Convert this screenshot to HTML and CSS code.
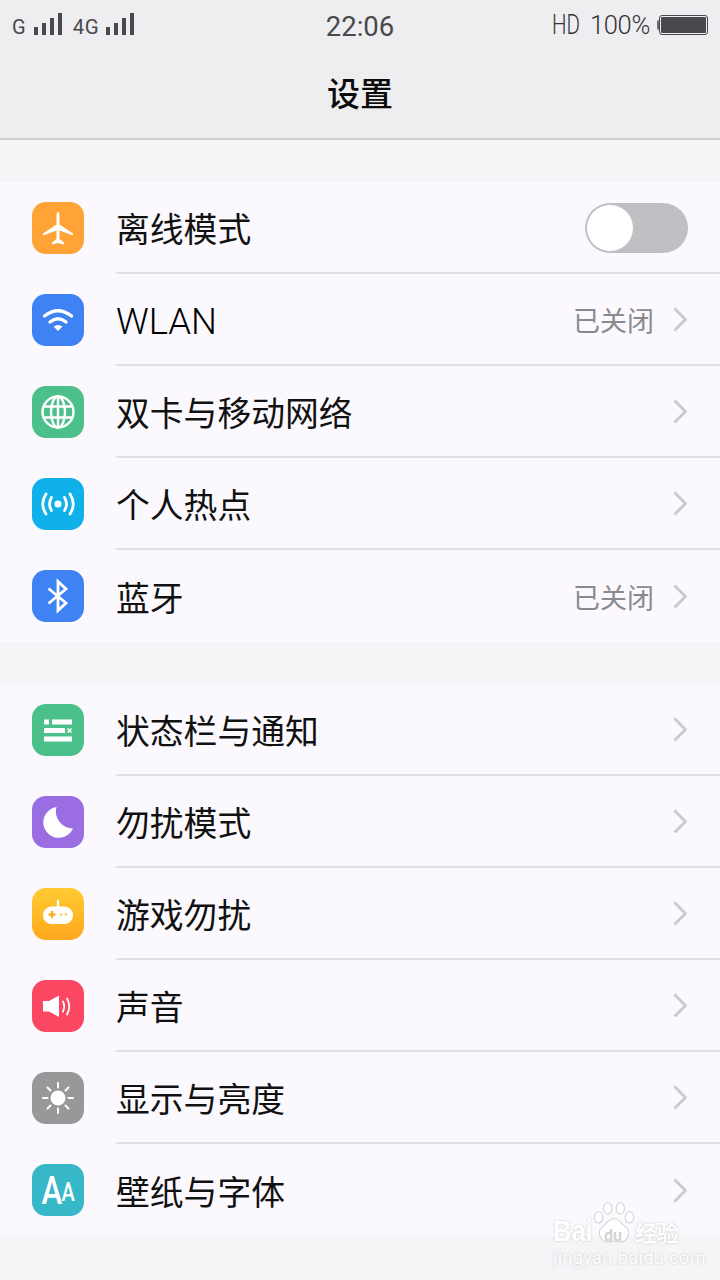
FILE: index.html
```html
<!DOCTYPE html>
<html lang="zh-CN">
<head>
    <meta charset="UTF-8">
    <meta name="viewport" content="width=device-width, initial-scale=1.0">
    <title>设置</title>
    <link rel="stylesheet" href="styles.css">
</head>
<body>

    <!-- Top bar -->
    <header class="top-bar">
        <div class="status-bar">
            <div class="status-left">
                <span class="net">G</span>
                <span class="signal"><i></i><i></i><i></i><i></i></span>
                <span class="net net-4g">4G</span>
                <span class="signal"><i></i><i></i><i></i><i></i></span>
            </div>
            <div class="clock">22:06</div>
            <div class="status-right">
                <span class="hd">HD</span>
                <span class="percent">100%</span>
                <span class="battery-nub"></span>
                <span class="battery"></span>
            </div>
        </div>
        <h1 class="title">设置</h1>
    </header>

    <!-- Connections -->
    <section class="group">
        <div class="row">
            <svg class="tile tile-orange" viewBox="0 0 52 52"><path fill="#fff" d="M26 10c.9 0 1.500 2 1.500 4v8.500L41 31.500v2L27.500 28.500v8.500l4.500 3.500v2L26 41l-6 1.500v-2l4.500-3.500v-8.500L11 33.500v-2l13.500-9V14c0-2 .6-4 1.500-4z"/></svg>
            <div class="row-body">
                <span class="label">离线模式</span>
                <span class="toggle"><span class="knob"></span></span>
            </div>
        </div>
        <div class="row">
            <svg class="tile tile-blue" viewBox="0 0 52 52"><g fill="none" stroke="#fff" stroke-width="3.400" stroke-linecap="round"><path d="M12.500 22Q26 11.500 39.500 22"/><path d="M18 28Q26 21.500 34 28"/></g><path fill="#fff" d="M21.500 32.500Q26 29.500 30.500 32.500L26 37z"/></svg>
            <div class="row-body">
                <span class="label label-latin">WLAN</span>
                <span class="value">已关闭</span>
                <svg class="chevron" viewBox="0 0 14 25"><path d="M1.500 1.500L12.500 12.500L1.500 23.500"/></svg>
            </div>
        </div>
        <div class="row">
            <svg class="tile tile-green" viewBox="0 0 52 52"><g fill="none" stroke="#fff" stroke-width="2.400"><circle cx="26" cy="26" r="15.500"/><ellipse cx="26" cy="26" rx="7" ry="15.500"/><path d="M26 10.500V41.500M12 20.500H40M12 31.500H40"/></g></svg>
            <div class="row-body">
                <span class="label">双卡与移动网络</span>
                <svg class="chevron" viewBox="0 0 14 25"><path d="M1.500 1.500L12.500 12.500L1.500 23.500"/></svg>
            </div>
        </div>
        <div class="row">
            <svg class="tile tile-cyan" viewBox="0 0 52 52"><circle cx="26" cy="26" r="3.600" fill="#fff"/><g fill="none" stroke="#fff" stroke-width="2.800" stroke-linecap="round"><path d="M19.500 19.500Q15.500 26 19.500 32.500"/><path d="M32.500 19.500Q36.500 26 32.500 32.500"/><path d="M14 16Q7.500 26 14 36"/><path d="M38 16Q44.500 26 38 36"/></g></svg>
            <div class="row-body">
                <span class="label">个人热点</span>
                <svg class="chevron" viewBox="0 0 14 25"><path d="M1.500 1.500L12.500 12.500L1.500 23.500"/></svg>
            </div>
        </div>
        <div class="row">
            <svg class="tile tile-blue" viewBox="0 0 52 52"><path fill="none" stroke="#fff" stroke-width="2.800" d="M16.500 18.500L34 33L26 40.500V11.500L34 19L16.500 33.500"/></svg>
            <div class="row-body">
                <span class="label">蓝牙</span>
                <span class="value">已关闭</span>
                <svg class="chevron" viewBox="0 0 14 25"><path d="M1.500 1.500L12.500 12.500L1.500 23.500"/></svg>
            </div>
        </div>
    </section>

    <!-- Notifications, sound and display -->
    <section class="group">
        <div class="row">
            <svg class="tile tile-green" viewBox="0 0 52 52"><g fill="#fff"><rect x="12" y="15.500" width="5" height="5"/><rect x="20" y="15.500" width="20" height="5"/><rect x="12" y="24" width="21" height="5"/><rect x="12" y="32.500" width="28" height="5"/></g><path fill="none" stroke="#fff" stroke-width="1.500" d="M35.500 24.500l4 4M39.500 24.500l-4 4"/></svg>
            <div class="row-body">
                <span class="label">状态栏与通知</span>
                <svg class="chevron" viewBox="0 0 14 25"><path d="M1.500 1.500L12.500 12.500L1.500 23.500"/></svg>
            </div>
        </div>
        <div class="row">
            <svg class="tile tile-purple" viewBox="0 0 52 52"><path fill="#fff" d="M24.500 11A15.500 15.500 0 1 0 41 32.500A17 17 0 0 1 24.500 11z"/></svg>
            <div class="row-body">
                <span class="label">勿扰模式</span>
                <svg class="chevron" viewBox="0 0 14 25"><path d="M1.500 1.500L12.500 12.500L1.500 23.500"/></svg>
            </div>
        </div>
        <div class="row">
            <svg class="tile tile-yellow" viewBox="0 0 52 52"><rect x="24.800" y="12" width="2.400" height="8" rx="1.200" fill="#fff"/><rect x="11" y="18.500" width="30" height="17.500" rx="8.700" fill="#fff"/><path fill="#ffae20" d="M18.800 23h2.400v2.300h2.300v2.400h-2.300V30h-2.400v-2.300h-2.300v-2.400h2.300z"/><circle cx="29.300" cy="26.500" r="1.300" fill="#ffc95a"/><circle cx="34" cy="26.500" r="1.300" fill="#ffc95a"/></svg>
            <div class="row-body">
                <span class="label">游戏勿扰</span>
                <svg class="chevron" viewBox="0 0 14 25"><path d="M1.500 1.500L12.500 12.500L1.500 23.500"/></svg>
            </div>
        </div>
        <div class="row">
            <svg class="tile tile-red" viewBox="0 0 52 52"><path fill="#fff" d="M11 21h6l10-5.500v21.500l-10-5.500h-6z"/><g fill="none" stroke="#fff" stroke-width="1.800" stroke-linecap="round"><path d="M31 21.500Q33.500 26.500 31 31.500"/><path d="M35 18.500Q39.500 26.500 35 34.500"/></g></svg>
            <div class="row-body">
                <span class="label">声音</span>
                <svg class="chevron" viewBox="0 0 14 25"><path d="M1.500 1.500L12.500 12.500L1.500 23.500"/></svg>
            </div>
        </div>
        <div class="row">
            <svg class="tile tile-gray" viewBox="0 0 52 52"><circle cx="26" cy="26" r="7.500" fill="#fff"/><path fill="none" stroke="#fff" stroke-width="2" stroke-linecap="round" d="M26 11V15.500M26 36.500V41M11 26H15.500M36.500 26H41M15.500 15.500L18.500 18.500M33.500 33.500L36.500 36.500M15.500 36.500L18.500 33.500M33.500 18.500L36.500 15.500"/></svg>
            <div class="row-body">
                <span class="label">显示与亮度</span>
                <svg class="chevron" viewBox="0 0 14 25"><path d="M1.500 1.500L12.500 12.500L1.500 23.500"/></svg>
            </div>
        </div>
        <div class="row">
            <svg class="tile tile-teal" viewBox="0 0 52 52"><text class="tile-a" x="12" y="40" font-size="39">A</text><text class="tile-a" x="37" y="37" font-size="25">A</text></svg>
            <div class="row-body">
                <span class="label">壁纸与字体</span>
                <svg class="chevron" viewBox="0 0 14 25"><path d="M1.500 1.500L12.500 12.500L1.500 23.500"/></svg>
            </div>
        </div>
    </section>

    <!-- Site stamp over the bottom corner -->
    <div class="stamp">
        <svg class="stamp-paw" viewBox="0 0 60 60"><g fill="#fff" stroke="#d4d4d6" stroke-width="1.500"><ellipse cx="8" cy="22" rx="6" ry="8"/><ellipse cx="21" cy="9" rx="6" ry="8"/><ellipse cx="39" cy="9" rx="6" ry="8"/><ellipse cx="52" cy="22" rx="6" ry="8"/><path d="M30 24c8 0 10 7 18 13 6 5 2 21-10 20-4 0-5-1-8-1s-4 1-8 1c-12 1-16-15-10-20 8-6 10-13 18-13z"/></g></svg>
        <span class="stamp-bai">Bai</span>
        <span class="stamp-du">du</span>
        <span class="stamp-cn">经验</span>
        <span class="stamp-url">jingyan.baidu.com</span>
    </div>

</body>
</html>
```

FILE: styles.css
```css
body {
    margin: 0;
    width: 720px;
    height: 1280px;
    overflow: hidden;
    position: relative;
    background-color: #f5f4f7;
    font-family: Roboto, "Noto Sans CJK SC", sans-serif;
    color: #111;
}

/* Header with status bar and page title */
.top-bar {
    height: 138px;
    background-color: #eeedf0;
    border-bottom: 2px solid #cdcccf;
    margin-bottom: 42px;
}

.status-bar {
    height: 50px;
    padding: 0 12px;
    display: grid;
    grid-template-columns: 1fr auto 1fr;
    align-items: center;
    color: #4a484c;
}

.status-left {
    display: flex;
    align-items: flex-end;
    height: 22px;
    margin-top: -2px;
}

.net {
    font-size: 20px;
    line-height: 16px;
    margin-right: 8px;
}

.net-4g {
    margin-left: 11px;
    margin-right: 7px;
    font-size: 20.500px;
    letter-spacing: 0.5px;
}

.signal {
    display: flex;
    align-items: flex-end;
    gap: 4px;
    height: 22px;
}

.signal i {
    display: block;
    width: 4px;
    background-color: #4a484c;
}

.signal i:nth-child(1) { height: 8px; }
.signal i:nth-child(2) { height: 12px; }
.signal i:nth-child(3) { height: 17px; }
.signal i:nth-child(4) { height: 22px; }

.clock {
    font-size: 27.500px;
    margin-top: 2px;
}

.status-right {
    display: flex;
    justify-content: flex-end;
    align-items: center;
    margin-right: 1px;
    color: #343236;
}

.hd {
    font-size: 27px;
    font-weight: 300;
    width: 38px;
    display: inline-block;
    transform: scaleX(0.76);
    transform-origin: left center;
}

.percent {
    font-size: 25.500px;
    font-weight: 300;
    letter-spacing: -0.3px;
    margin-right: 7px;
}

.battery-nub {
    width: 2px;
    height: 10px;
    margin-right: 1px;
    background-color: #6d6c6f;
    border-radius: 2px 0 0 2px;
}

.battery {
    width: 45px;
    height: 16px;
    background-color: #4a484c;
    border: 1px solid #eeedf0;
    outline: 1px solid #4a484c;
    border-radius: 2px;
}

.title {
    margin: 0;
    height: 88px;
    line-height: 90px;
    text-align: center;
    font-size: 33px;
    font-weight: 500;
    color: #0c0c0c;
}

/* Settings groups */
.group {
    background-color: #fbf9fd;
    margin-bottom: 42px;
}

.row {
    height: 92px;
    padding-left: 32px;
    display: flex;
    align-items: center;
    gap: 32px;
}

.row-body {
    flex: 1;
    height: 92px;
    box-sizing: border-box;
    padding-right: 32px;
    display: flex;
    align-items: center;
    border-bottom: 2px solid #e1e0e3;
}

.row:last-child .row-body {
    border-bottom: none;
}

.label {
    flex: 1;
    font-size: 33.800px;
    font-weight: 400;
    color: #111;
}

.label-latin {
    font-size: 36.500px;
    font-weight: 300;
    color: #000;
    margin-top: 4px;
}

.value {
    font-size: 27px;
    font-weight: 400;
    color: #8a898c;
    margin-right: 19px;
}

.chevron {
    width: 14px;
    height: 25px;
    margin-right: 1px;
    fill: none;
    stroke: #cbcacd;
    stroke-width: 3;
}

/* App style icon tiles */
.tile {
    width: 52px;
    height: 52px;
    border-radius: 14px;
    flex-shrink: 0;
}

.tile-orange { background-color: #ffa336; }
.tile-blue { background-color: #3f82f4; }
.tile-green { background-color: #4cc08a; }
.tile-cyan { background-color: #10b1ea; }
.tile-purple { background-color: #9a6ee2; }
.tile-yellow { background: linear-gradient(#ffcb30, #ffa81e); }
.tile-red { background-color: #fb4762; }
.tile-gray { background-color: #98979a; }
.tile-teal { background-color: #37b8c8; }

.tile-a {
    fill: #fff;
    font-family: Roboto, sans-serif;
    font-weight: 500;
    transform: scaleX(0.8);
}

/* Toggle switch */
.toggle {
    width: 103px;
    height: 50px;
    margin-top: 2px;
    border-radius: 25px;
    background-color: #c1bfc3;
    display: flex;
}

.knob {
    width: 48px;
    height: 48px;
    margin: 1px;
    box-sizing: border-box;
    border-radius: 50%;
    background-color: #fff;
    border: 1px solid #c1bfc3;
}

/* Stamp in the bottom corner */
.stamp {
    position: absolute;
    left: 552px;
    top: 1200px;
    width: 130px;
    height: 66px;
    color: #fff;
    text-shadow: 0 0 2px #bdbdc0;
}

.stamp span {
    position: absolute;
    white-space: nowrap;
}

.stamp-paw {
    position: absolute;
    left: 41px;
    top: 2px;
    width: 42px;
    height: 42px;
}

.stamp-bai {
    left: 1px;
    top: 15px;
    font-family: "Liberation Sans", sans-serif;
    font-size: 29px;
    font-weight: 700;
    transform: scaleX(0.88);
    transform-origin: left center;
}

.stamp-du {
    left: 52px;
    top: 26px;
    font-size: 16px;
    font-weight: 700;
    color: #d4d4d6;
    text-shadow: none;
}

.stamp-cn {
    left: 83px;
    top: 15px;
    font-size: 22px;
    font-weight: 700;
}

.stamp-url {
    left: 1px;
    top: 47px;
    font-size: 18px;
    letter-spacing: 0.4px;
}
```
